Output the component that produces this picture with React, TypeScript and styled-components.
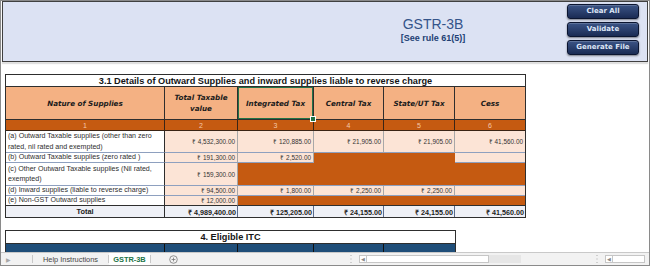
import React from "react";
import styled, { createGlobalStyle, css } from "styled-components";

const GlobalStyle = createGlobalStyle`
  html, body { margin: 0; padding: 0; background: #fff; }
  body { font-family: "Liberation Sans", Arial, sans-serif; }
  * { box-sizing: border-box; }
`;

const Page = styled.div`
  width: 650px;
  height: 266px;
  border: 1px solid #8a8a8a;
  display: flex;
  flex-direction: column;
  overflow: hidden;
  background: #fff;
`;

const Sheet = styled.div`
  flex: 1;
  min-height: 0;
  overflow: hidden;
  display: flex;
  flex-direction: column;
  align-items: flex-start;
`;

const Header = styled.header`
  margin-left: 1px;
  width: 646px;
  height: 61px;
  flex: none;
  border: 1px solid #404040;
  background: #dce2f3;
  box-shadow: 0 2px 1px rgba(0, 0, 0, 0.12);
  display: flex;
  align-items: flex-start;
`;

const TitleBlock = styled.div`
  margin-left: 330px;
  width: 200px;
  padding-top: 14px;
  display: flex;
  flex-direction: column;
  align-items: center;
`;

const MainTitle = styled.h1`
  margin: 0;
  font-size: 14px;
  font-weight: normal;
  line-height: 17px;
  color: #34548a;
`;

const SubTitle = styled.div`
  font-size: 9px;
  font-weight: bold;
  line-height: 11px;
  color: #223f73;
`;

const ButtonStack = styled.div`
  margin-left: auto;
  margin-right: 8px;
  padding-top: 2px;
  display: flex;
  flex-direction: column;
  gap: 3px;
`;

const MacroButton = styled.button`
  width: 72px;
  height: 15px;
  padding: 0;
  border: 1px solid #0b1530;
  border-radius: 3px;
  background: linear-gradient(#3b5486, #1a2b54);
  box-shadow: 0 1px 2px rgba(0, 0, 0, 0.45), inset 0 1px 0 rgba(255, 255, 255, 0.18);
  color: #dde5f6;
  font-family: "DejaVu Sans", Verdana, sans-serif;
  font-weight: bold;
  font-size: 7px;
  line-height: 13px;
`;

const Table = styled.div<{ $cols: string; $rows: string; $width: number; $top: number }>`
  margin-left: 4px;
  margin-top: ${(p) => p.$top}px;
  width: ${(p) => p.$width}px;
  flex: none;
  display: grid;
  grid-template-columns: ${(p) => p.$cols};
  grid-template-rows: ${(p) => p.$rows};
  border: 1px solid #2e2e2e;
  background: #fff;
`;

const TitleCell = styled.div`
  grid-column: 1 / -1;
  border-bottom: 1px solid #2e2e2e;
  font-weight: bold;
  font-size: 9.2px;
  color: #151515;
  display: flex;
  align-items: center;
  justify-content: center;
`;

const HeadCell = styled.div<{ $last?: boolean; $selected?: boolean }>`
  position: relative;
  background: #f4b183;
  border-bottom: 1px solid #2e2e2e;
  border-right: ${(p) => (p.$last ? "none" : "1px solid #2e2e2e")};
  font-family: "DejaVu Sans", Verdana, sans-serif;
  font-weight: bold;
  font-style: italic;
  font-size: 7.2px;
  line-height: 11px;
  color: #1c1c1c;
  display: flex;
  align-items: center;
  justify-content: center;
  text-align: center;
  padding: 0 6px;
  ${(p) =>
    p.$selected &&
    css`
      box-shadow: inset 0 0 0 1px #217346;
      &::after {
        content: "";
        position: absolute;
        right: -3px;
        bottom: -3px;
        width: 4px;
        height: 4px;
        background: #217346;
        border: 1px solid #fff;
        z-index: 2;
      }
    `}
`;

const NumCell = styled.div<{ $last?: boolean }>`
  background: #c55a11;
  border-bottom: 1px solid #3a2415;
  border-right: ${(p) => (p.$last ? "none" : "1px solid #3a2415")};
  color: #f6c9aa;
  font-size: 7px;
  display: flex;
  align-items: center;
  justify-content: center;
`;

const LabelCell = styled.div<{ $bottom?: string }>`
  background: #fff;
  border-right: 1px solid #2e2e2e;
  border-bottom: 1px solid ${(p) => p.$bottom ?? "#8ea0bf"};
  color: #2e2e2e;
  font-size: 7.1px;
  line-height: 10.5px;
  padding: 0 2px;
  display: flex;
  align-items: center;
`;

const ValueCell = styled.div<{ $last?: boolean; $bottom?: string }>`
  background: #fce4d6;
  border-right: ${(p) => (p.$last ? "none" : "1px solid #a8a8a8")};
  border-bottom: 1px solid ${(p) => p.$bottom ?? "#8ea0bf"};
  color: #333;
  font-size: 6.4px;
  padding-right: 2px;
  display: flex;
  align-items: center;
  justify-content: flex-end;
`;

const BlockedCell = styled.div<{ $span: number; $bottom?: string }>`
  grid-column: span ${(p) => p.$span};
  background: #c55a11;
  border-bottom: 1px solid ${(p) => p.$bottom ?? "#c55a11"};
`;

const TotalLabel = styled.div`
  background: #eef0f6;
  border-right: 1px solid #2e2e2e;
  font-weight: bold;
  font-size: 7.4px;
  color: #222;
  display: flex;
  align-items: center;
  justify-content: center;
`;

const TotalValue = styled.div<{ $last?: boolean }>`
  background: #eef0f6;
  border-right: ${(p) => (p.$last ? "none" : "1px solid #5d6b8a")};
  font-weight: bold;
  font-size: 7.2px;
  color: #222;
  padding-right: 1px;
  display: flex;
  align-items: center;
  justify-content: flex-end;
`;

const DarkCell = styled.div<{ $last?: boolean }>`
  background: #1f4e79;
  border-right: ${(p) => (p.$last ? "none" : "1px solid #111")};
`;

const TabBar = styled.footer`
  height: 13px;
  flex: none;
  background: #f2f2f2;
  border-top: 1px solid #c9c9c9;
  display: flex;
  align-items: stretch;
  font-size: 7.4px;
  color: #454545;
`;

const NavArrow = styled.div`
  width: 31px;
  padding-left: 5px;
  display: flex;
  align-items: center;
  color: #a8a8a8;
  font-size: 6px;
`;

const Sep = styled.div`
  width: 1px;
  margin: 2px 0;
  background: #c8c8c8;
`;

const SheetTab = styled.div<{ $active?: boolean; $width: number }>`
  width: ${(p) => p.$width}px;
  display: flex;
  align-items: center;
  justify-content: center;
  ${(p) =>
    p.$active &&
    css`
      background: #fff;
      color: #217346;
      font-weight: bold;
    `}
`;

const AddTab = styled.div`
  width: 50px;
  display: flex;
  align-items: center;
  padding-left: 18px;
`;

const Dots = styled.div<{ $left: number }>`
  margin-left: ${(p) => p.$left}px;
  width: 4px;
  display: flex;
  align-items: center;
  justify-content: center;
`;

const ScrollBox = styled.div<{ $left: number; $width: number }>`
  margin-left: ${(p) => p.$left}px;
  width: ${(p) => p.$width}px;
  margin-top: 2px;
  margin-bottom: 2px;
  display: flex;
  background: #e6e6e6;
`;

const ScrollBtn = styled.div`
  width: 8px;
  border: 1px solid #c6c6c6;
  background: #fff;
  color: #888;
  font-size: 5px;
  display: flex;
  align-items: center;
  justify-content: center;
`;

const Thumb = styled.div<{ $width: number }>`
  width: ${(p) => p.$width}px;
  border: 1px solid #c6c6c6;
  border-left: none;
  background: #fff;
`;

type Row = {
  label: string;
  height: number;
  cells: (string | { blocked: number; bottom?: string })[];
};

const rows: Row[] = [
  {
    label: "(a) Outward Taxable supplies (other than zero rated, nil rated and exempted)",
    height: 22,
    cells: ["₹ 4,532,300.00", "₹ 120,885.00", "₹ 21,905.00", "₹ 21,905.00", "₹ 41,560.00"],
  },
  {
    label: "(b) Outward Taxable supplies (zero rated )",
    height: 10,
    cells: ["₹ 191,300.00", "₹ 2,520.00", { blocked: 2 }, ""],
  },
  {
    label: "(c) Other Outward Taxable supplies (Nil rated, exempted)",
    height: 23,
    cells: ["₹ 159,300.00", { blocked: 4, bottom: "#8ea0bf" }],
  },
  {
    label: "(d) Inward supplies (liable to reverse charge)",
    height: 10,
    cells: ["₹ 94,500.00", "₹ 1,800.00", "₹ 2,250.00", "₹ 2,250.00", ""],
  },
  {
    label: "(e) Non-GST Outward supplies",
    height: 10,
    cells: ["₹ 12,000.00", { blocked: 4, bottom: "#2e2e2e" }],
  },
];

const heads = [
  "Nature of Supplies",
  "Total Taxable value",
  "Integrated Tax",
  "Central Tax",
  "State/UT Tax",
  "Cess",
];

const totals = ["₹ 4,989,400.00", "₹ 125,205.00", "₹ 24,155.00", "₹ 24,155.00", "₹ 41,560.00"];

const COLS = "159px 73px 76px 70px 71px 70px";

function DotsIcon() {
  return (
    <svg width="2" height="8" viewBox="0 0 2 8">
      <rect x="0.5" y="0" width="1" height="1" fill="#aaa" />
      <rect x="0.5" y="3.5" width="1" height="1" fill="#aaa" />
      <rect x="0.5" y="7" width="1" height="1" fill="#aaa" />
    </svg>
  );
}

export default function App() {
  const rowHeights = ["12px", "33px", "11px", ...rows.map((r) => `${r.height}px`), "11px"].join(" ");
  return (
    <>
      <GlobalStyle />
      <Page>
        <Sheet>
          <Header>
            <TitleBlock>
              <MainTitle>GSTR-3B</MainTitle>
              <SubTitle>[See rule 61(5)]</SubTitle>
            </TitleBlock>
            <ButtonStack>
              <MacroButton>Clear All</MacroButton>
              <MacroButton>Validate</MacroButton>
              <MacroButton>Generate File</MacroButton>
            </ButtonStack>
          </Header>

          <Table $cols={COLS} $rows={rowHeights} $width={521} $top={12}>
            <TitleCell>3.1 Details of Outward Supplies and inward supplies liable to reverse charge</TitleCell>
            {heads.map((h, i) => (
              <HeadCell key={h} $last={i === heads.length - 1} $selected={i === 2}>
                {h}
              </HeadCell>
            ))}
            {heads.map((_, i) => (
              <NumCell key={i} $last={i === heads.length - 1}>
                {i + 1}
              </NumCell>
            ))}
            {rows.map((r, ri) => {
              const lastRow = ri === rows.length - 1;
              const bottom = lastRow ? "#2e2e2e" : undefined;
              let col = 1;
              return (
                <React.Fragment key={r.label}>
                  <LabelCell $bottom={bottom}>{r.label}</LabelCell>
                  {r.cells.map((c, ci) => {
                    if (typeof c === "string") {
                      col += 1;
                      return (
                        <ValueCell key={ci} $last={col === 6} $bottom={bottom}>
                          {c}
                        </ValueCell>
                      );
                    }
                    col += c.blocked;
                    return <BlockedCell key={ci} $span={c.blocked} $bottom={c.bottom} />;
                  })}
                </React.Fragment>
              );
            })}
            <TotalLabel>Total</TotalLabel>
            {totals.map((t, i) => (
              <TotalValue key={i} $last={i === totals.length - 1}>
                {t}
              </TotalValue>
            ))}
          </Table>

          <Table $cols="159px 73px 76px 70px 71px" $rows="13px 20px" $width={451} $top={12}>
            <TitleCell>4. Eligible ITC</TitleCell>
            {[0, 1, 2, 3, 4].map((i) => (
              <DarkCell key={i} $last={i === 4} />
            ))}
          </Table>
        </Sheet>

        <TabBar>
          <NavArrow>▶</NavArrow>
          <Sep />
          <SheetTab $width={75}>Help Instructions</SheetTab>
          <Sep />
          <SheetTab $width={41} $active>
            GSTR-3B
          </SheetTab>
          <Sep />
          <AddTab>
            <svg width="9" height="9" viewBox="0 0 9 9">
              <circle cx="4.5" cy="4.5" r="3.8" fill="none" stroke="#7a7a7a" strokeWidth="0.8" />
              <path d="M4.5 2.6v3.8M2.6 4.5h3.8" stroke="#7a7a7a" strokeWidth="0.8" />
            </svg>
          </AddTab>
          <Dots $left={148}>
            <DotsIcon />
          </Dots>
          <ScrollBox $left={6} $width={162}>
            <ScrollBtn>◀</ScrollBtn>
            <Thumb $width={122} />
          </ScrollBox>
          <Dots $left={74}>
            <DotsIcon />
          </Dots>
          <ScrollBox $left={6} $width={40}>
            <ScrollBtn>◀</ScrollBtn>
            <Thumb $width={32} />
          </ScrollBox>
        </TabBar>
      </Page>
    </>
  );
}
